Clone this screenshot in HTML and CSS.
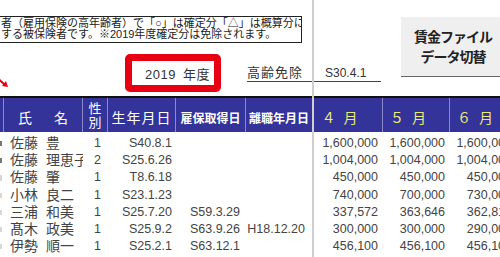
FILE: index.html
```html
<!DOCTYPE html>
<html lang="ja">
<head>
    <meta charset="UTF-8">
    <title>賃金台帳</title>
    <link rel="stylesheet" href="styles.css">
</head>
<body>
    <div class="sheet">
        <!-- upper area: notes, year, buttons -->
        <div class="top">
            <div class="top-left">
                <div class="notice">
                    <div>者（雇用保険の高年齢者）で「○」は確定分「△」は概算分に</div>
                    <div>する被保険者です。※2019年度確定分は免除されます。</div>
                </div>
                <div class="year-row">
                    <div class="year-box">2019 年度</div>
                    <div class="exempt">
                        <span class="exempt-label">高齢免除</span>
                        <span class="exempt-date">S30.4.1</span>
                    </div>
                </div>
            </div>
            <div class="switch-btn">
                <span>賃金ファイル</span>
                <span>データ切替</span>
            </div>
        </div>

        <!-- header row -->
        <div class="grid thead">
            <div class="th"></div>
            <div class="th th-name"><span>氏</span><span>名</span></div>
            <div class="th th-sex"><span>性</span><span>別</span></div>
            <div class="th th-big">生年月日</div>
            <div class="th th-bold">雇保取得日</div>
            <div class="th th-bold">離職年月日</div>
            <div class="th th-month">４ 月</div>
            <div class="th th-month">５ 月</div>
            <div class="th th-month">６ 月</div>
        </div>

        <!-- data rows -->
        <div class="tbody">
            <div class="grid row">
                <div class="mark dark"></div>
                <div class="name"><span class="sei">佐藤</span><span>豊</span></div>
                <div class="sex">1</div>
                <div class="num birth">S40.8.1</div>
                <div class="num hire"></div>
                <div class="num leave"></div>
                <div class="num pay">1,600,000</div>
                <div class="num pay">1,600,000</div>
                <div class="num pay">1,600,000</div>
            </div>
            <div class="grid row">
                <div class="mark dark"></div>
                <div class="name"><span class="sei">佐藤</span><span>理恵子</span></div>
                <div class="sex">2</div>
                <div class="num birth">S25.6.26</div>
                <div class="num hire"></div>
                <div class="num leave"></div>
                <div class="num pay">1,004,000</div>
                <div class="num pay">1,004,000</div>
                <div class="num pay">1,004,000</div>
            </div>
            <div class="grid row">
                <div class="mark"></div>
                <div class="name"><span class="sei">佐藤</span><span>肇</span></div>
                <div class="sex">1</div>
                <div class="num birth">T8.6.18</div>
                <div class="num hire"></div>
                <div class="num leave"></div>
                <div class="num pay">450,000</div>
                <div class="num pay">450,000</div>
                <div class="num pay">450,000</div>
            </div>
            <div class="grid row">
                <div class="mark"></div>
                <div class="name"><span class="sei">小林</span><span>良二</span></div>
                <div class="sex">1</div>
                <div class="num birth">S23.1.23</div>
                <div class="num hire"></div>
                <div class="num leave"></div>
                <div class="num pay">740,000</div>
                <div class="num pay">700,000</div>
                <div class="num pay">730,000</div>
            </div>
            <div class="grid row">
                <div class="mark"></div>
                <div class="name"><span class="sei">三浦</span><span>和美</span></div>
                <div class="sex">1</div>
                <div class="num birth">S25.7.20</div>
                <div class="num hire">S59.3.29</div>
                <div class="num leave"></div>
                <div class="num pay">337,572</div>
                <div class="num pay">363,646</div>
                <div class="num pay">362,818</div>
            </div>
            <div class="grid row">
                <div class="mark"></div>
                <div class="name"><span class="sei">髙木</span><span>政美</span></div>
                <div class="sex">1</div>
                <div class="num birth">S25.9.2</div>
                <div class="num hire">S63.9.26</div>
                <div class="num leave">H18.12.20</div>
                <div class="num pay">300,000</div>
                <div class="num pay">300,000</div>
                <div class="num pay">290,000</div>
            </div>
            <div class="grid row">
                <div class="mark"></div>
                <div class="name"><span class="sei">伊勢</span><span>順一</span></div>
                <div class="sex">1</div>
                <div class="num birth">S25.2.1</div>
                <div class="num hire">S63.12.1</div>
                <div class="num leave"></div>
                <div class="num pay">456,100</div>
                <div class="num pay">456,100</div>
                <div class="num pay">456,100</div>
            </div>
        </div>

        <!-- drawn arrow shape and frozen pane line -->
        <svg class="arrow" width="12" height="14" viewBox="0 0 12 14">
            <path d="M -6 0 L 5 10" stroke="#e60012" stroke-width="2" fill="none"/>
            <path d="M 2 11 L 8 12 L 6 6 z" fill="#e60012"/>
        </svg>
        <div class="freeze-line"></div>
    </div>
</body>
</html>
```

FILE: styles.css
```css
body {
    margin: 0;
    background: #fff;
    font-family: "Liberation Sans", "Noto Sans CJK JP", sans-serif;
    color: #333;
}
.sheet {
    position: relative;
    width: 500px;
    height: 257px;
    overflow: hidden;
}

/* upper area */
.top {
    display: flex;
    height: 96px;
}
.top-left {
    width: 395px;
    flex-shrink: 0;
    padding-top: 16px;
    box-sizing: border-box;
}
.notice {
    margin-left: -8px;
    width: 310px;
    height: 27px;
    box-sizing: border-box;
    border: 1.5px solid #222;
    padding: 1px 0 0 8px;
    font-size: 11px;
    line-height: 11px;
    white-space: nowrap;
    overflow: hidden;
    color: #222;
}
.year-row {
    display: flex;
    align-items: flex-start;
    margin-top: 11px;
}
.year-box {
    margin-left: 125px;
    width: 96px;
    height: 38px;
    box-sizing: border-box;
    border: 7px solid #e60012;
    border-radius: 5px;
    display: flex;
    align-items: center;
    justify-content: flex-end;
    padding-right: 4px;
    font-size: 13px;
    letter-spacing: 0.5px;
    word-spacing: 3px;
}
.exempt {
    margin-left: 26px;
    width: 134px;
    display: flex;
    padding-top: 11px;
    line-height: 16px;
    border-bottom: 1px solid #444;
}
.exempt-label {
    font-size: 13px;
    letter-spacing: 1px;
}
.exempt-date {
    margin-left: 22px;
    font-size: 12px;
}
.switch-btn {
    margin: 17px 0 0 6px;
    width: 104px;
    height: 60px;
    flex-shrink: 0;
    box-sizing: border-box;
    background: #efefef;
    border-bottom: 1px solid #666;
    display: flex;
    flex-direction: column;
    align-items: center;
    justify-content: center;
    font-size: 14px;
    font-weight: bold;
    letter-spacing: -1px;
    line-height: 20px;
    color: #222;
}

/* table */
.grid {
    display: grid;
    grid-template-columns: 4px 79px 25px 68px 70px 67px 70px 67px 67px;
}
.thead {
    height: 36px;
    box-sizing: border-box;
    border-top: 2px solid #111;
    background: #333399;
}
.th {
    border-right: 1px solid #8a8ac8;
    display: flex;
    align-items: center;
    justify-content: center;
    color: #fff;
    padding-top: 4px;
    white-space: nowrap;
}
.th-name {
    gap: 22px;
    font-size: 14px;
}
.th-sex {
    flex-direction: column;
    font-size: 13px;
    line-height: 14px;
    padding-top: 2px;
}
.th-big {
    font-size: 14px;
    letter-spacing: 1px;
}
.th-bold {
    font-size: 12px;
    font-weight: bold;
}
.th-month {
    color: #ecec7a;
    font-size: 14px;
    letter-spacing: 2px;
    padding-right: 14px;
}
.tbody {
    padding-top: 3px;
}
.row {
    height: 17.2px;
    font-size: 12.5px;
    line-height: 17.2px;
    white-space: nowrap;
    color: #444;
}
.row > div {
    overflow: hidden;
}
.mark {
    margin: 6px 2px 6px 0;
    background: #d6d6d6;
}
.mark.dark {
    background: #777;
}
.name {
    padding-left: 6px;
    font-size: 14px;
}
.sei {
    display: inline-block;
    width: 36px;
}
.sex {
    text-align: right;
    padding-right: 7px;
}
.num {
    text-align: right;
}
.birth {
    padding-right: 4px;
}
.hire {
    padding-right: 6px;
}
.leave {
    padding-right: 8px;
}
.pay {
    padding-right: 5px;
}

/* overlays */
.arrow {
    position: absolute;
    left: 0;
    top: 75px;
}
.freeze-line {
    position: absolute;
    left: 312px;
    top: 0;
    width: 2px;
    height: 257px;
    background: #cfcfcf;
}
```
